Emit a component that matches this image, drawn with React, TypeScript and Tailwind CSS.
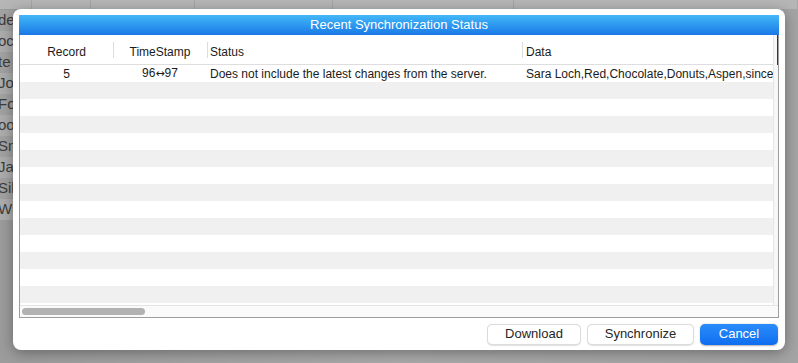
import React from "react";

const BACKDROP_NAMES = ["de", "oc", "te", "Jo", "Fo", "oo", "Sm", "Ja", "Silv", "Wils"];

const ROW_COUNT = 14;

const FONT = { fontFamily: '"Liberation Sans", Arial, sans-serif' };

export default function App() {
  return (
    <div
      className="relative h-[363px] w-[798px] overflow-hidden bg-[#ababab]"
      style={FONT}
    >
      <Backdrop />
      <div className="absolute left-[13px] top-[9px] flex h-[341px] w-[772px] flex-col rounded-[8px] bg-white px-[6px] pt-[6px] shadow-[0_3px_14px_rgba(0,0,0,0.35)]">
        <div className="flex h-[20px] items-center justify-center bg-gradient-to-b from-[#44b8f7] to-[#1a78e6] text-[13px] text-white">
          Recent Synchronization Status
        </div>
        <SyncTable />
        <div className="flex flex-1 items-center justify-end gap-[6px] pr-[1px]">
          <DialogButton label="Download" width="w-[94px]" />
          <DialogButton label="Synchronize" width="w-[107px]" />
          <button className="flex h-[21px] w-[78px] items-center justify-center rounded-[5px] bg-gradient-to-b from-[#2a8cfa] to-[#0f6ef0] text-[13px] text-white shadow-[0_0.5px_1.5px_rgba(0,0,0,0.3)]">
            Cancel
          </button>
        </div>
      </div>
    </div>
  );
}

function Backdrop() {
  return (
    <div className="flex h-full flex-col">
      <div className="flex h-[9px] bg-[#b6b6b6]">
        {[57, 108, 190, 252, 330, 520].map((x) => (
          <div key={x} className="h-full border-r border-[#a6a6a6]" style={{ width: x }} />
        ))}
      </div>
      <div className="flex flex-1 bg-gradient-to-r from-[#9c9c9c] via-[#aaaaaa] to-[#a4a4a4]">
        <div className="flex w-[13px] flex-col overflow-hidden pt-[1px]">
          {BACKDROP_NAMES.map((name, i) => (
            <div
              key={name}
              className={`-ml-[2px] flex h-[21px] items-center whitespace-nowrap text-[15px] text-[#3d3d3d] ${
                i % 2 === 0 ? "bg-[#a2a2a2]" : "bg-[#adadad]"
              }`}
            >
              {name}
            </div>
          ))}
        </div>
      </div>
    </div>
  );
}

function SyncTable() {
  return (
    <div className="flex h-[283px] flex-col border border-t-0 border-[#9d9d9d] text-[12px] text-[#1b1b1b]">
      <div className="flex flex-1 overflow-hidden">
        <div className="flex flex-1 flex-col">
          <div className="flex h-[30px] shrink-0 items-center border-b border-[#dedede] pt-[4px]">
            <HeaderCell className="w-[93px] justify-center" label="Record" />
            <HeaderCell className="w-[94px] justify-center" label="TimeStamp" divider />
            <HeaderCell className="w-[315px] pl-[3px]" label="Status" divider />
            <HeaderCell className="flex-1 pl-[4px]" label="Data" divider />
          </div>
          <div className="flex h-[17px] shrink-0 items-center">
            <div className="w-[93px] text-center">5</div>
            <div className="w-[94px] text-center">
              96
              <span style={{ fontFamily: '"DejaVu Sans", sans-serif' }} className="text-[11px]">
                ↔
              </span>
              97
            </div>
            <div className="w-[315px] whitespace-nowrap pl-[3px]">
              Does not include the latest changes from the server.
            </div>
            <div className="flex-1 whitespace-nowrap pl-[4px]">
              Sara Loch,Red,Chocolate,Donuts,Aspen,since
            </div>
          </div>
          {Array.from({ length: ROW_COUNT - 1 }, (_, i) => (
            <div
              key={i}
              className={`h-[17px] shrink-0 ${i % 2 === 0 ? "bg-[#f0f0f0]" : "bg-white"}`}
            />
          ))}
        </div>
        <div className="flex w-[12px] flex-col border-l border-[#e6e6e6] bg-[#f7f7f7]">
          <div className="h-[30px] border-r border-[#3a3a3a]" />
        </div>
      </div>
      <div className="flex h-[12px] items-center border-t border-[#e4e4e4] bg-[#fafafa] px-[2px]">
        <div className="h-[7px] w-[123px] rounded-full bg-[#b2b2b2]" />
      </div>
    </div>
  );
}

function HeaderCell({
  label,
  className,
  divider = false,
}: {
  label: string;
  className: string;
  divider?: boolean;
}) {
  return (
    <div className={`relative flex h-full items-center ${className}`}>
      {divider && (
        <span className="absolute left-0 top-[3px] h-[16px] w-px bg-[#dcdcdc]" />
      )}
      {label}
    </div>
  );
}

function DialogButton({ label, width }: { label: string; width: string }) {
  return (
    <button
      className={`flex h-[21px] ${width} items-center justify-center rounded-[5px] border border-[#dcdcdc] bg-white text-[13px] text-[#262626] shadow-[0_0.5px_1px_rgba(0,0,0,0.12)]`}
    >
      {label}
    </button>
  );
}
